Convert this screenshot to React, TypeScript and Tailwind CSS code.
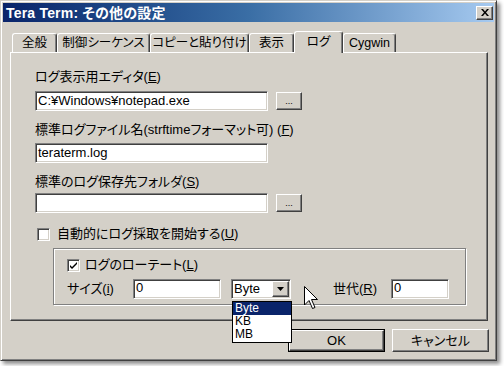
import React from "react";

const font = "font-['Liberation_Sans','Noto_Sans_CJK_JP',sans-serif] [font-feature-settings:'palt']";
const sunken =
  "bg-white border border-t-[#808080] border-l-[#808080] border-b-white border-r-white shadow-[inset_1px_1px_0_#404040,inset_-1px_-1px_0_#d4d0c8]";
const raised =
  "bg-[#d4d0c8] border border-t-white border-l-white border-r-[#404040] border-b-[#404040] shadow-[inset_-1px_-1px_0_#808080]";

function Checkbox({ checked }: { checked?: boolean }) {
  return (
    <div className={`w-[13px] h-[13px] ${sunken} flex items-center justify-center`}>
      {checked && (
        <svg width="9" height="9" viewBox="0 0 9 9">
          <path d="M1 4 L3 6 L8 1 L8 3 L3 8 L1 6 Z" fill="#000" />
        </svg>
      )}
    </div>
  );
}

function Tab({ label, w, selected }: { label: string; w: number; selected?: boolean }) {
  return (
    <div
      style={{ width: w }}
      className={
        selected
          ? "relative z-10 h-[22px] -mb-[1px] bg-[#d4d0c8] border-t border-l border-white border-r border-r-[#404040] rounded-t-[3px] shadow-[inset_-1px_0_0_#808080] flex items-start justify-center pt-[3px] text-[12.5px] leading-[15px] whitespace-nowrap"
          : "h-[19px] bg-[#d4d0c8] border-t border-l border-white border-r border-r-[#404040] rounded-t-[3px] shadow-[inset_-1px_0_0_#808080] flex items-start justify-center pt-[2px] text-[12.5px] leading-[15px] whitespace-nowrap"
      }
    >
      {label}
    </div>
  );
}

function BrowseButton() {
  return (
    <div className={`ml-[8px] mt-[1px] w-[26px] h-[18px] ${raised} flex items-end justify-center pb-[3px] text-[9px] leading-[9px]`}>
      ...
    </div>
  );
}

export default function App() {
  return (
    <div className={`relative w-[504px] h-[366px] bg-white overflow-hidden text-black ${font}`}>
      <div className="w-[497px] h-[361px] bg-[#d4d0c8] border border-t-[#d4d0c8] border-l-[#d4d0c8] border-r-[#404040] border-b-[#404040] shadow-[inset_1px_1px_0_#fff,inset_-1px_-1px_0_#808080,3px_3px_4px_rgba(0,0,0,0.45)] p-[2px] flex flex-col">
        {/* title bar */}
        <div className="h-[19px] bg-linear-to-r from-[#0a246a] via-[#3a6ea5] to-[#a6caf0] flex items-center justify-between pl-[3px] pr-[1px]">
          <span className="text-white font-bold text-[14px] leading-[16px] tracking-[0.2px]">Tera Term: その他の設定</span>
          <div className={`w-[17px] h-[14px] ${raised} flex items-center justify-center`}>
            <svg width="8" height="7" viewBox="0 0 8 7">
              <path d="M0 0 H2 L4 2.5 L6 0 H8 L5 3.5 L8 7 H6 L4 4.5 L2 7 H0 L3 3.5 Z" fill="#000" />
            </svg>
          </div>
        </div>

        {/* tabs */}
        <div className="mt-[9px] ml-[9px] h-[21px] flex items-end">
          <Tab label="全般" w={45} />
          <Tab label="制御シーケンス" w={93} />
          <Tab label="コピーと貼り付け" w={99} />
          <Tab label="表示" w={45} />
          <Tab label="ログ" w={49} selected />
          <Tab label="Cygwin" w={53} />
        </div>

        {/* panel */}
        <div className="ml-[7px] w-[478px] h-[269px] border border-t-white border-l-white border-r-[#404040] border-b-[#404040] shadow-[inset_-1px_-1px_0_#808080] pl-[24px] pt-[16px] flex flex-col text-[13px]">
          <div className="h-[16px] leading-[16px]">ログ表示用エディタ(<u>E</u>)</div>
          <div className="mt-[6px] flex">
            <div className={`w-[233px] h-[20px] ${sunken} pl-[2px] leading-[17px] text-[13px]`}>C:¥Windows¥notepad.exe</div>
            <BrowseButton />
          </div>
          <div className="mt-[11px] h-[16px] leading-[16px]">標準ログファイル名(strftimeフォーマット可) (<u>F</u>)</div>
          <div className="mt-[5px] flex">
            <div className={`w-[233px] h-[20px] ${sunken} pl-[2px] leading-[17px] text-[13px]`}>teraterm.log</div>
          </div>
          <div className="mt-[11px] h-[16px] leading-[16px]">標準のログ保存先フォルダ(<u>S</u>)</div>
          <div className="mt-[3px] flex">
            <div className={`w-[233px] h-[20px] ${sunken}`}></div>
            <BrowseButton />
          </div>
          <div className="mt-[13px] h-[16px] flex items-center pl-[2px]">
            <Checkbox />
            <span className="ml-[7px] leading-[16px]">自動的にログ採取を開始する(<u>U</u>)</span>
          </div>

          {/* group box */}
          <div className="mt-[6px] ml-[18px] w-[413px] h-[57px] border border-[#808080] shadow-[inset_1px_1px_0_#fff,1px_1px_0_#fff] pl-[13px] pt-[8px] flex flex-col">
            <div className="h-[16px] flex items-center">
              <Checkbox checked />
              <span className="ml-[5px] leading-[16px]">ログのローテート(<u>L</u>)</span>
            </div>
            <div className="mt-[6px] flex items-center">
              <span className="w-[66px] leading-[16px]">サイズ(<u>i</u>)</span>
              <div className={`w-[88px] h-[20px] ${sunken} pl-[2px] leading-[15px] text-[13px]`}>0</div>
              <div className={`ml-[10px] w-[60px] h-[20px] ${sunken} flex items-center justify-between pl-[2px] pr-[1px]`}>
                <span className="text-[13px] leading-[16px]">Byte</span>
                <div className={`w-[17px] h-[16px] ${raised} flex items-center justify-center`}>
                  <svg width="7" height="4" viewBox="0 0 7 4">
                    <path d="M0 0 H7 L3.5 4 Z" fill="#000" />
                  </svg>
                </div>
              </div>
              <span className="ml-[42px] w-[58px] leading-[16px]">世代(<u>R</u>)</span>
              <div className={`w-[58px] h-[20px] ${sunken} pl-[2px] leading-[15px] text-[13px]`}>0</div>
            </div>
          </div>
        </div>

        {/* buttons */}
        <div className="mt-[8px] flex justify-end pr-[5px] gap-[7px] text-[13px]">
          <div className="w-[97px] h-[23px] border border-black">
            <div className={`w-full h-full ${raised} flex items-center justify-center leading-[16px]`}>OK</div>
          </div>
          <div className={`w-[97px] h-[23px] ${raised} flex items-center justify-center leading-[16px]`}>キャンセル</div>
        </div>
      </div>

      {/* dropdown list */}
      <div className="absolute left-[232px] top-[301px] w-[60px] h-[42px] bg-white border border-black flex flex-col text-[12px] leading-[13px]">
        <div className="h-[13px] bg-[#0a246a] text-white pl-[2px] overflow-hidden">Byte</div>
        <div className="h-[13px] pl-[2px] overflow-hidden">KB</div>
        <div className="h-[13px] pl-[2px] overflow-hidden">MB</div>
      </div>

      {/* mouse cursor */}
      <svg className="absolute left-[304px] top-[286px]" width="14" height="24" viewBox="0 0 14 24">
        <path
          d="M0.5 0.5 L0.5 19 L5 14.5 L8.5 22.5 L11 21.5 L7.5 13.5 L13.5 13.5 Z"
          fill="#fff"
          stroke="#000"
          strokeWidth="1"
          strokeLinejoin="miter"
        />
      </svg>
    </div>
  );
}
